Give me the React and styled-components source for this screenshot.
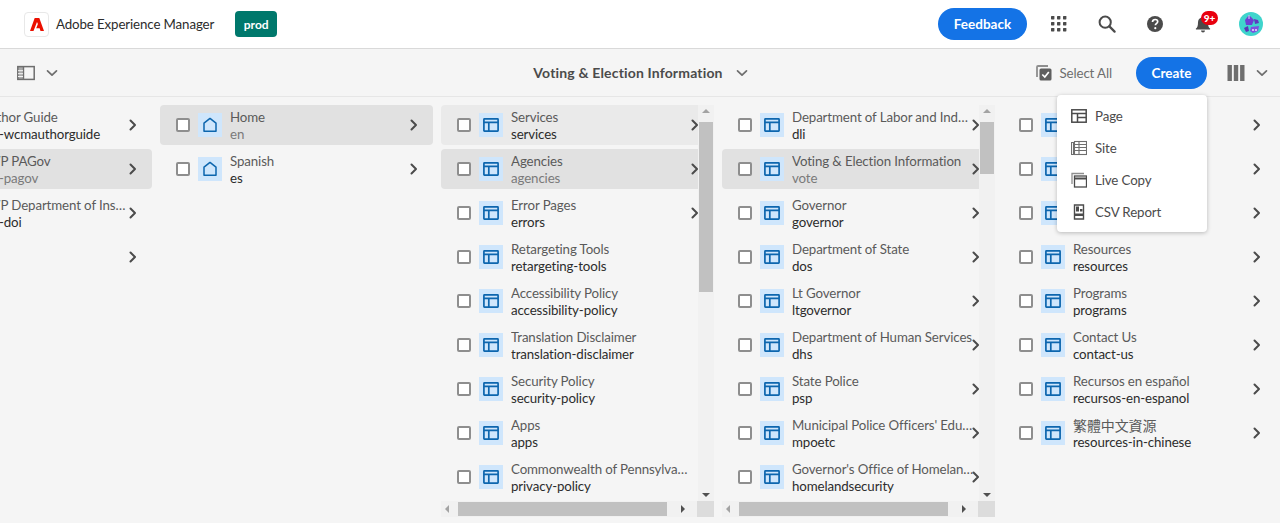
import React from 'react';
import styled, { createGlobalStyle } from 'styled-components';

const GlobalStyle = createGlobalStyle`
  html, body {
    margin: 0;
    padding: 0;
    height: 100%;
    overflow: hidden;
    background: #f5f5f5;
    font-family: "Lato", "Noto Sans CJK TC", sans-serif;
  }
  #root { height: 100%; }
  * { box-sizing: border-box; }
`;

const Shell = styled.div`
  display: flex;
  flex-direction: column;
  width: 1280px;
  height: 523px;
  overflow: hidden;
  background: #f5f5f5;
  font-size: 13.3px;
  letter-spacing: -0.12px;
`;

const Header = styled.header`
  display: flex;
  align-items: center;
  height: 49px;
  padding: 0 5px 0 24px;
  background: #fff;
  border-bottom: 1px solid #d9d9d9;
`;

const LogoBox = styled.div`
  display: flex;
  align-items: center;
  justify-content: center;
  width: 25px;
  height: 25px;
  background: #fff;
  border: 1px solid #e8e8e8;
  border-radius: 4px;
`;

const Brand = styled.span`
  margin-left: 7px;
  color: #2c2c2c;
`;

const EnvBadge = styled.span`
  display: flex;
  align-items: center;
  justify-content: center;
  width: 42px;
  height: 26px;
  margin-left: 21px;
  border-radius: 4px;
  background: #00786c;
  color: #fff;
  font-size: 12px;
  font-weight: 700;
  letter-spacing: 0;
`;

const HeaderRight = styled.div`
  display: flex;
  align-items: center;
  margin-left: auto;
`;

const Pill = styled.button`
  height: 32px;
  padding: 0;
  width: ${p => p.$w}px;
  border: 0;
  border-radius: 16px;
  background: #1473e6;
  color: #fff;
  font: 700 13.5px "Lato", sans-serif;
`;

const IconButton = styled.span`
  position: relative;
  display: flex;
  align-items: center;
  justify-content: center;
  width: 48px;
  height: 32px;
  margin-left: ${p => (p.$first ? '8px' : '0')};
  color: #4b4b4b;
`;

const Badge = styled.span`
  position: absolute;
  top: 3px;
  left: 22px;
  height: 14px;
  min-width: 17px;
  padding: 0 2px;
  border-radius: 7px;
  background: #e8000e;
  color: #fff;
  font-size: 10px;
  font-weight: 900;
  letter-spacing: 0;
  line-height: 14px;
  text-align: center;
`;

const Toolbar = styled.div`
  display: grid;
  grid-template-columns: 1fr auto 1fr;
  align-items: center;
  height: 48px;
  padding: 0 12px 0 17px;
  border-bottom: 1px solid #e6e6e6;
`;

const ToolGroup = styled.div`
  display: flex;
  align-items: center;
  justify-content: ${p => (p.$end ? 'flex-end' : 'flex-start')};
  gap: ${p => p.$gap || 0}px;
  color: #6e6e6e;
`;

const TitleGroup = styled(ToolGroup)`
  gap: 13px;
  padding-right: 4px;
`;

const PageTitle = styled.span`
  font-size: 14px;
  font-weight: 700;
  letter-spacing: 0.16px;
  color: #4b4b4b;
`;

const SelectAll = styled.span`
  display: flex;
  align-items: center;
  gap: 8px;
  margin-right: 24px;
  color: #6e6e6e;
`;

const CreateWrap = styled.div`
  position: relative;
  margin-right: 20px;
`;

const ColumnsToggle = styled.span`
  display: flex;
  align-items: center;
  gap: 11px;
`;

const Menu = styled.ul`
  position: absolute;
  z-index: 5;
  top: 38px;
  right: 0;
  width: 150px;
  margin: 0;
  padding: 5px 0 4px;
  list-style: none;
  background: #fff;
  border-radius: 4px;
  box-shadow: 0 1px 4px rgba(0, 0, 0, 0.25);
`;

const MenuItem = styled.li`
  display: flex;
  align-items: center;
  gap: 8px;
  height: 32px;
  padding-left: 14px;
  color: #4b4b4b;
`;

const Columns = styled.div`
  display: flex;
  flex: 1;
  min-height: 0;
  margin-left: -129px;
`;

const Column = styled.section`
  position: relative;
  flex: 0 0 281px;
  min-width: 0;
  padding: 8px 0 0 8px;
`;

const Viewport = styled.div`
  width: 257px;
  height: 396px;
  overflow: hidden;
`;

const Row = styled.div`
  display: flex;
  align-items: center;
  width: 273px;
  height: 40px;
  margin-bottom: 4px;
  padding-left: 16px;
  border-radius: 4px;
  background: ${p => (p.$state === 'selected' ? '#e1e1e1' : p.$state === 'hover' ? '#eaeaea' : 'transparent')};
`;

const Check = styled.span`
  flex: none;
  width: 14px;
  height: 14px;
  background: #fff;
  border: 2px solid #8e8e8e;
  border-radius: 2px;
`;

const Thumb = styled.span`
  flex: none;
  display: flex;
  align-items: center;
  justify-content: center;
  width: 24px;
  height: 24px;
  margin-left: 8px;
  background: #cfe6fc;
  color: #0d66ae;
`;

const Labels = styled.div`
  flex: none;
  width: 182px;
  margin-left: 8px;
  padding-top: 2px;
  line-height: 17px;
`;

const Title = styled.div`
  overflow: hidden;
  white-space: nowrap;
  text-overflow: ellipsis;
  color: #5a5a5a;
  font-size: ${p => (p.$cjk ? '14px' : 'inherit')};
`;

const Sub = styled.div`
  overflow: hidden;
  white-space: nowrap;
  text-overflow: ellipsis;
  color: ${p => (p.$dim ? '#7a7a7a' : '#2c2c2c')};
`;

const Chevron = styled.span`
  flex: none;
  display: flex;
  margin-left: -2px;
  color: #4b4b4b;
`;

const VTrack = styled.div`
  position: absolute;
  top: 8px;
  left: 265px;
  display: flex;
  flex-direction: column;
  align-items: center;
  width: 16px;
  height: 396px;
  background: #f1f1f1;
`;

const VThumb = styled.div`
  width: 14px;
  height: ${p => p.$h}px;
  margin-top: 17px;
  background: #c1c1c1;
`;

const HTrack = styled.div`
  position: absolute;
  top: 404px;
  left: 8px;
  display: flex;
  align-items: center;
  width: 257px;
  height: 16px;
  background: #f1f1f1;
`;

const HThumb = styled.div`
  width: 209px;
  height: 14px;
  margin-left: 17px;
  background: #c1c1c1;
`;

const Corner = styled.div`
  position: absolute;
  top: 404px;
  left: 264px;
  width: 17px;
  height: 16px;
  background: #dcdcdc;
`;

const Arrow = styled.span`
  position: absolute;
  width: 0;
  height: 0;
  border: 4px solid transparent;
  ${p => p.$dir === 'up' && 'top: 4px; left: 4px; border-top: 0; border-bottom-color: #a3a3a3;'}
  ${p => p.$dir === 'down' && 'bottom: 4px; left: 4px; border-bottom: 0; border-top-color: #505050;'}
  ${p => p.$dir === 'left' && 'top: 4px; left: 4px; border-left: 0; border-right-color: #a3a3a3;'}
  ${p => p.$dir === 'right' && 'top: 4px; right: 13px; border-right: 0; border-left-color: #505050;'}
`;

const Svg = ({ w = 18, h = 18, children, vb = '0 0 18 18' }) => (
  <svg width={w} height={h} viewBox={vb} fill="none">{children}</svg>
);

const AdobeMark = () => (
  <svg width="14" height="13" viewBox="0 0 14 13" fill="#eb1000">
    <path d="M4.700 0H9.300L14 13H10.500L9.600 10.300H6.200L7.900 6 7 3.900 3.500 13H0z" />
  </svg>
);

const AppsIcon = () => (
  <Svg>
    {[1, 7, 13].map(y => [1, 7, 13].map(x => (
      <rect key={`${x}-${y}`} x={x} y={y} width="3.400" height="3.400" rx="0.600" fill="currentColor" />
    )))}
  </Svg>
);

const SearchIcon = () => (
  <Svg>
    <circle cx="7.200" cy="7.200" r="5.600" stroke="currentColor" strokeWidth="2" />
    <path d="M11.400 11.400 16.600 16.600" stroke="currentColor" strokeWidth="2.200" strokeLinecap="round" />
  </Svg>
);

const HelpIcon = () => (
  <Svg>
    <circle cx="9" cy="9" r="8" fill="currentColor" />
    <path d="M6.500 7c.1-1.600 1.200-2.500 2.700-2.500s2.500.9 2.500 2.100c0 1-.5 1.500-1.300 2-.7.5-1 .8-1 1.600" stroke="#fff" strokeWidth="1.700" />
    <circle cx="9.300" cy="13.200" r="1.100" fill="#fff" />
  </Svg>
);

const BellIcon = () => (
  <Svg>
    <path d="M9 1.200c-.8 0-1.300.5-1.400 1.200C5.200 3 4 5 4 7.400c0 3.400-.7 4.900-2 6.200-.4.4-.1 1 .4 1h13.200c.5 0 .8-.6.4-1-1.300-1.300-2-2.800-2-6.200 0-2.400-1.200-4.400-3.600-5C10.300 1.700 9.800 1.200 9 1.200z" fill="currentColor" />
    <path d="M7 15.600a2 2 0 0 0 4 0z" fill="currentColor" />
  </Svg>
);

const Avatar = () => (
  <svg width="24" height="24" viewBox="0 0 24 24">
    <circle cx="12" cy="12" r="12" fill="#3fd4cc" />
    <path d="M6 8 10 3 15 8 13 13 7 13z" fill="#6b3fd4" />
    <path d="M15 7 19 8 20 11 16 12z" fill="#5f3ac0" />
    <path d="M12 15 20 14 19 19 14 21 11 19z" fill="#7d4fe0" />
    <path d="M5 16 9 14 10 19 7 20z" fill="#5a35b8" />
    <circle cx="14" cy="18" r="1.100" fill="#fff" opacity="0.8" />
    <circle cx="17" cy="18" r="1.100" fill="#fff" opacity="0.8" />
    <path d="M10 3v4" stroke="#fff" strokeWidth="1" opacity="0.8" />
  </svg>
);

const Caret = ({ size = 12 }) => (
  <svg width={size} height={size} viewBox="0 0 12 12" fill="none">
    <path d="M1.500 3.800 6 8.200 10.500 3.800" stroke="currentColor" strokeWidth="1.700" strokeLinecap="round" strokeLinejoin="round" />
  </svg>
);

const RailIcon = () => (
  <Svg>
    <rect x="0.800" y="2.600" width="16.400" height="12.800" stroke="currentColor" strokeWidth="1.500" />
    <rect x="1" y="3" width="5.500" height="12" fill="currentColor" opacity="0.55" />
    <path d="M6.500 3v12" stroke="currentColor" strokeWidth="1.400" />
    <path d="M1 6.700h5M1 9.700h5M1 12.500h5" stroke="#f5f5f5" strokeWidth="1" />
  </Svg>
);

const SelectAllIcon = () => (
  <svg width="16" height="16" viewBox="0 0 16 16" fill="none">
    <path d="M1 12V2c0-.6.400-1 1-1h10" stroke="#8e8e8e" strokeWidth="1.800" />
    <rect x="3.500" y="3.500" width="12" height="12" rx="1.500" fill="#5f5f5f" />
    <path d="M6.300 9.500 8.800 12l4-5" stroke="#fff" strokeWidth="1.700" />
  </svg>
);

const ColumnsIcon = () => (
  <svg width="18" height="16" viewBox="0 0 18 16" fill="currentColor">
    <rect x="0.500" y="0" width="4.400" height="16" />
    <rect x="6.800" y="0" width="4.400" height="16" />
    <rect x="13.100" y="0" width="4.400" height="16" />
  </svg>
);

const PageGlyph = () => (
  <svg width="16" height="14" viewBox="0 0 16 14" fill="none" stroke="currentColor" strokeWidth="1.700">
    <rect x="0.900" y="0.900" width="14.200" height="12.200" rx="0.500" />
    <path d="M0.900 4.400h14.200M5.800 4.400v8.700" />
  </svg>
);

const HomeGlyph = () => (
  <svg width="16" height="16" viewBox="0 0 16 16" fill="none" stroke="currentColor" strokeWidth="1.500" strokeLinejoin="round">
    <path d="M2 14.200V6.200L8 1.400l6 4.800v8z" />
  </svg>
);

const RowChevron = () => (
  <svg width="8" height="12" viewBox="0 0 8 12" fill="none">
    <path d="M1.500 1.500 6 6 1.500 10.500" stroke="currentColor" strokeWidth="2" strokeLinecap="round" strokeLinejoin="round" />
  </svg>
);

const MenuPage = () => (
  <svg width="16" height="14" viewBox="0 0 16 14" fill="none" stroke="#4b4b4b" strokeWidth="1.500">
    <rect x="0.800" y="0.800" width="14.400" height="12.400" />
    <path d="M0.800 4.500h14.400M6.500 4.500v8.700M6.500 8.500h8.700" />
  </svg>
);

const MenuSite = () => (
  <svg width="16" height="16" viewBox="0 0 16 16" fill="none" stroke="#6e6e6e" strokeWidth="1.100">
    <path d="M2.500 2.500v12h-2v-12z" />
    <rect x="3.500" y="1.500" width="12" height="13" />
    <path d="M3.500 4.500h12M3.500 7.500h12M3.500 10.500h12M8 1.500v13" />
  </svg>
);

const MenuLive = () => (
  <svg width="16" height="16" viewBox="0 0 16 16" fill="none" stroke="#4b4b4b" strokeWidth="1.300">
    <path d="M1 12V1.500h12" stroke="#8e8e8e" />
    <rect x="3.500" y="4" width="12" height="11" />
    <path d="M3.500 6.500h12" strokeWidth="2" />
  </svg>
);

const MenuCsv = () => (
  <svg width="16" height="16" viewBox="0 0 16 16" fill="none">
    <path d="M3.500 1h9v14h-9z" stroke="#4b4b4b" strokeWidth="1.400" />
    <path d="M5 2.500h3v5H5zM9 5h2.500v2.500H9z" fill="#4b4b4b" />
    <path d="M3.500 9.500h9V12h-9z" fill="#4b4b4b" />
  </svg>
);

const col1 = [
  { t: 'AEM Author Guide', s: 'page-wp-wcmauthorguide' },
  { t: 'COPA WP PAGov', s: 'page-wp-pagov', state: 'selected' },
  { t: 'COPA WP Department of Insurance', s: 'page-wp-doi' },
  { t: 'Test', s: 'test' },
];

const col2 = [
  { t: 'Home', s: 'en', state: 'selected', home: true },
  { t: 'Spanish', s: 'es', home: true },
];

const col3 = [
  { t: 'Services', s: 'services', state: 'hover' },
  { t: 'Agencies', s: 'agencies', state: 'selected' },
  { t: 'Error Pages', s: 'errors' },
  { t: 'Retargeting Tools', s: 'retargeting-tools', noNext: true },
  { t: 'Accessibility Policy', s: 'accessibility-policy', noNext: true },
  { t: 'Translation Disclaimer', s: 'translation-disclaimer', noNext: true },
  { t: 'Security Policy', s: 'security-policy', noNext: true },
  { t: 'Apps', s: 'apps', noNext: true },
  { t: 'Commonwealth of Pennsylvania Privacy Policy', s: 'privacy-policy', noNext: true },
];

const col4 = [
  { t: 'Department of Labor and Industry', s: 'dli' },
  { t: 'Voting & Election Information', s: 'vote', state: 'selected' },
  { t: 'Governor', s: 'governor' },
  { t: 'Department of State', s: 'dos' },
  { t: 'Lt Governor', s: 'ltgovernor' },
  { t: 'Department of Human Services', s: 'dhs' },
  { t: 'State Police', s: 'psp' },
  { t: "Municipal Police Officers' Education & Training", s: 'mpoetc' },
  { t: "Governor's Office of Homeland Security", s: 'homelandsecurity' },
];

const col5 = [
  { t: 'Voting', s: 'voting' },
  { t: 'Elections', s: 'elections' },
  { t: 'Get Involved', s: 'get-involved' },
  { t: 'Resources', s: 'resources' },
  { t: 'Programs', s: 'programs' },
  { t: 'Contact Us', s: 'contact-us' },
  { t: 'Recursos en español', s: 'recursos-en-espanol' },
  { t: '繁體中文資源', s: 'resources-in-chinese', cjk: true },
];

const Item = ({ item }) => (
  <Row $state={item.state}>
    <Check />
    <Thumb>{item.home ? <HomeGlyph /> : <PageGlyph />}</Thumb>
    <Labels>
      <Title $cjk={item.cjk}>{item.t}</Title>
      <Sub $dim={item.state === 'selected'}>{item.s}</Sub>
    </Labels>
    {!item.noNext && <Chevron><RowChevron /></Chevron>}
  </Row>
);

const ScrollColumn = ({ items, thumb }) => (
  <Column>
    <Viewport>
      {items.map(i => <Item key={i.s} item={i} />)}
    </Viewport>
    <VTrack>
      <Arrow $dir="up" />
      <VThumb $h={thumb} />
      <Arrow $dir="down" />
    </VTrack>
    <HTrack>
      <Arrow $dir="left" />
      <HThumb />
      <Arrow $dir="right" />
    </HTrack>
    <Corner />
  </Column>
);

const PlainColumn = ({ items }) => (
  <Column>
    {items.map(i => <Item key={i.s} item={i} />)}
  </Column>
);

export default function App() {
  return (
    <>
      <GlobalStyle />
      <Shell>
        <Header>
          <LogoBox><AdobeMark /></LogoBox>
          <Brand>Adobe Experience Manager</Brand>
          <EnvBadge>prod</EnvBadge>
          <HeaderRight>
            <Pill $w={89}>Feedback</Pill>
            <IconButton $first><AppsIcon /></IconButton>
            <IconButton><SearchIcon /></IconButton>
            <IconButton><HelpIcon /></IconButton>
            <IconButton><BellIcon /><Badge>9+</Badge></IconButton>
            <IconButton><Avatar /></IconButton>
          </HeaderRight>
        </Header>
        <Toolbar>
          <ToolGroup $gap={11}>
            <RailIcon />
            <Caret />
          </ToolGroup>
          <TitleGroup>
            <PageTitle>Voting &amp; Election Information</PageTitle>
            <Caret />
          </TitleGroup>
          <ToolGroup $end>
            <SelectAll><SelectAllIcon />Select All</SelectAll>
            <CreateWrap>
              <Pill $w={71}>Create</Pill>
              <Menu>
                <MenuItem><MenuPage />Page</MenuItem>
                <MenuItem><MenuSite />Site</MenuItem>
                <MenuItem><MenuLive />Live Copy</MenuItem>
                <MenuItem><MenuCsv />CSV Report</MenuItem>
              </Menu>
            </CreateWrap>
            <ColumnsToggle>
              <ColumnsIcon />
              <Caret />
            </ColumnsToggle>
          </ToolGroup>
        </Toolbar>
        <Columns>
          <PlainColumn items={col1} />
          <PlainColumn items={col2} />
          <ScrollColumn items={col3} thumb={170} />
          <ScrollColumn items={col4} thumb={52} />
          <PlainColumn items={col5} />
        </Columns>
      </Shell>
    </>
  );
}
